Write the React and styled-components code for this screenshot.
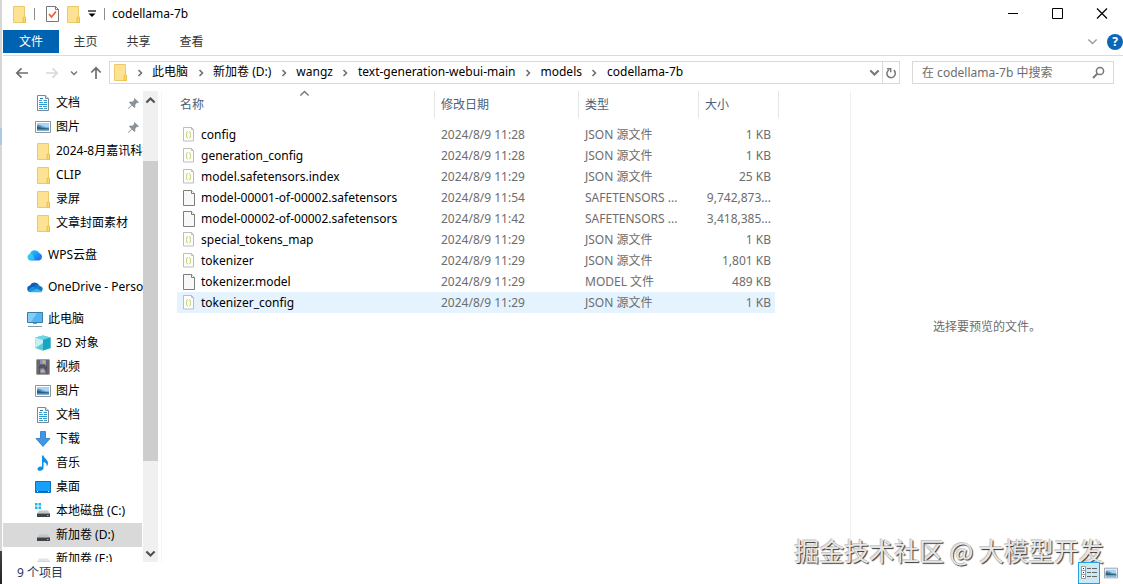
import React from "react";
import styled, { createGlobalStyle, css } from "styled-components";

const GlobalStyle = createGlobalStyle`
  * {
    box-sizing: border-box;
  }
  body {
    margin: 0;
    background: #fff;
    color: #000;
    font-family: "Noto Sans", "Noto Sans CJK SC", sans-serif;
    font-size: 12px;
    line-height: 16px;
  }
  button, input {
    font: inherit;
    color: inherit;
    border: 0;
    padding: 0;
    margin: 0;
    background: none;
  }
  a {
    color: inherit;
    text-decoration: none;
  }
  svg {
    display: block;
    flex: none;
  }
`;

// ---------- icons ----------

const FolderIcon = () => (
  <svg width="13" height="17" viewBox="0 0 13 17">
    <path d="M.5.5h11v9.500l1 1.500v5H.5z" fill="#fde293" stroke="#ecca6c" />
    <path d="M10 16.500V11.500l1.200-1 1.300 1v5z" fill="#fbd866" stroke="#e5bd48" strokeWidth=".8" />
  </svg>
);

const DocIcon = () => (
  <svg width="16" height="16" viewBox="0 0 16 16">
    <path d="M2.500.5h8l3 3v12h-11z" fill="#fff" stroke="#7c8791" />
    <path d="M10.500.5v3h3" fill="#e8edf1" stroke="#7c8791" />
    <path d="M4 5.500h3M8.500 5.500H12M4 7.500h4M9 7.500h3M4 9.500h8M4 11.500h3M8 11.500h4M4 13.500h4M9 13.500h3" stroke="#2f9bd0" />
    <path d="M5 3.500h3" stroke="#1f74ab" />
  </svg>
);

const PictureIcon = ({ size = 16 }) => (
  <svg width={size} height={size} viewBox="0 0 16 16">
    <path d="M.5 2.500h15v11H.5z" fill="#fff" stroke="#8d969e" />
    <path d="M2 4h12v8H2z" fill="#a9d3f7" />
    <path d="M2 6c3-1 4 .5 6 1.500s4 1 6 1V12H2z" fill="#5b93c0" />
    <path d="M2 7.500c2 0 4 1.500 6 1.500s4 .5 6 .5V11H2z" fill="#2c5f72" />
    <path d="M2 10.500h12V12H2z" fill="#7db2da" />
  </svg>
);

const WpsIcon = () => (
  <svg width="16" height="16" viewBox="0 0 16 16">
    <defs>
      <linearGradient id="wps" x1="0" y1="0" x2="1" y2="1">
        <stop offset="0" stopColor="#31d4f5" />
        <stop offset=".5" stopColor="#1c9cf8" />
        <stop offset="1" stopColor="#1f5df0" />
      </linearGradient>
    </defs>
    <path d="M4 13.500a3.500 3.500 0 0 1-1-6.800A5 5 0 0 1 12.300 6 3.900 3.900 0 0 1 12 13.500z" fill="url(#wps)" />
    <path d="M3 6.700C5 6.200 7 8 7.500 13.500H4a3.500 3.500 0 0 1-1-6.800z" fill="#3fe0ef" opacity=".6" />
  </svg>
);

const OneDriveIcon = () => (
  <svg width="16" height="16" viewBox="0 0 16 16">
    <path d="M3 6.500A5 5 0 0 1 12 6c-3 2-6 3-9 7a3.300 3.300 0 0 1 0-6.500z" fill="#0c5fb4" />
    <path d="M1.200 11.800C3 8 6 7 8 8l5 5H3.500a3 3 0 0 1-2.300-1.200z" fill="#1690df" />
    <path d="M7 8.500C9 5.500 12 5.500 13 7c3 .5 3.500 4 1.500 5.500z" fill="#1279cd" />
    <path d="M3 13.200c3-1 5-4 8-3l4 2.200c-.5.600-1 .8-2 .8z" fill="#35b5f0" />
  </svg>
);

const PcIcon = () => (
  <svg width="16" height="16" viewBox="0 0 16 16">
    <path d="M.5 1.500h15v10H.5z" fill="#52b4f2" stroke="#3c7cab" />
    <path d="M1 2h9L4 11H1z" fill="#83cdf9" />
    <path d="M6 12h4v1H6z" fill="#8b9aa5" />
    <path d="M1 15.500h14" stroke="#7b98ab" />
  </svg>
);

const CubeIcon = () => (
  <svg width="16" height="16" viewBox="0 0 16 16">
    <path d="M8 .5 15.500 2.500v10.500L8 15.500.5 13V2.500z" fill="#36b8d0" />
    <path d="M8 .5 15.500 2.500 8 5 .5 2.500z" fill="#6fd3e2" />
    <path d="M.5 2.500 8 5v10.500L.5 13z" fill="#c4eff3" />
    <path d="M.5 13 8 8v7.500z" fill="#5cc9d6" />
    <path d="M8 5 15.500 2.500V13L8 15.500z" fill="#17a6c2" />
  </svg>
);

const VideoIcon = () => (
  <svg width="16" height="16" viewBox="0 0 16 16">
    <path d="M1.500.5h13v15h-13z" fill="#3a3a3c" />
    <path d="M4.500 1h7v6.500h-7z" fill="#6f93dc" />
    <path d="M4.500 8.500h7V15h-7z" fill="#5676bd" />
    <path d="M7 1.500h3.500v3H8zM5 12l3-2.500 2.500 4H6z" fill="#e5b04a" />
    <path d="M5 5.500h5l1 2H5zM9 9h2.500v3z" fill="#6d4432" />
    <path d="M3 1.500v13M13 1.500v13" stroke="#f2f2f2" strokeDasharray="1 1" />
  </svg>
);

const DownloadIcon = () => (
  <svg width="16" height="16" viewBox="0 0 16 16">
    <path d="M5.500.5h5v7h4.500L8 15.500 1 7.500h4.500z" fill="#3c97e8" stroke="#2b77c2" strokeWidth=".8" />
  </svg>
);

const MusicIcon = () => (
  <svg width="16" height="16" viewBox="0 0 16 16">
    <path d="M7 .5h1.500C9 3.500 13 4.500 13 8c0 1.500-.5 2.500-1.300 3.500C12 8.500 10.500 7.500 8.500 7v6c0 1.500-1.500 2.800-3.500 2.800S2.500 14.800 2.500 13.700s1.500-2.200 3-2.200c.6 0 1 .1 1.500.3z" fill="#0d8fe8" />
  </svg>
);

const DesktopIcon = () => (
  <svg width="16" height="16" viewBox="0 0 16 16">
    <path d="M.5 2.500h15v11H.5z" fill="#17a0fb" stroke="#0b74b8" />
    <path d="M1 12h14v1H1z" fill="#0a63a6" />
    <path d="M2 12.500h1M13 12.500h1" stroke="#fff" />
  </svg>
);

const DriveIcon = ({ windows, pale }) => (
  <svg width="16" height="16" viewBox="0 0 16 16">
    {windows && <path d="M0 0h2.500v2.500H0zM3.500 0H6v2.500H3.500zM0 3.500h2.500V6H0zM3.500 3.500H6V6H3.500z" fill="#1fb3e6" />}
    <path d="M4 7.500h9l2 3H2z" fill={pale ? "#e4e4e4" : "#c3c6c8"} />
    <path d="M2 10.500h13v3.500H2z" fill={pale ? "#b9b9b9" : "#3f4447"} />
    <path d="M12 12.500h1.500" stroke="#54e08a" />
  </svg>
);

const PinIcon = () => (
  <svg width="11" height="11" viewBox="0 0 11 11">
    <path d="M6.500 0 11 4.500l-1.300.5-.7-.2-1.800 1.900.2 2.300-1 1L4 7.600.5 11 0 10.500 3.400 7 1 4.600l1-1 2.300.2 1.900-1.800L6 1.200z" fill="#8a9299" />
  </svg>
);

const JsonIcon = () => (
  <svg width="12" height="15" viewBox="0 0 12 15">
    <path d="M.5.5h8l2 2v11.500h-10z" fill="#fdfdfb" stroke="#bdbdbd" />
    <path d="M8.500.5v2h2" fill="none" stroke="#bdbdbd" />
    <path d="M4.700 4.500c-1.500 0-.8 2-1 2.600l-.7.6.7.6c.2.600-.5 2.600 1 2.600M6.300 4.500c1.500 0 .8 2 1 2.600l.7.6-.7.6c-.2.600.5 2.600-1 2.600" fill="none" stroke="#b5cf5c" />
  </svg>
);

const BlankIcon = () => (
  <svg width="12" height="16" viewBox="0 0 12 16">
    <path d="M.5.5h8l3 3v12H.5z" fill="#f8f8f8" stroke="#7d7d7d" />
    <path d="M8.500.5v3h3" fill="#fff" stroke="#7d7d7d" />
  </svg>
);

const CheckDocIcon = () => (
  <svg width="13" height="16" viewBox="0 0 13 16">
    <path d="M.5.5h9l3 3v12H.5z" fill="#fff" stroke="#777" />
    <path d="M9.500.5v3h3" fill="none" stroke="#777" />
    <path d="m3 8 2.500 3L10 5.500" fill="none" stroke="#ee5a28" strokeWidth="1.700" />
  </svg>
);

const Chevron = ({ dir = "right", size = 8, color = "#6b6b6b", width = 1.5 }) => {
  const turn = { right: 0, down: 90, left: 180, up: 270 }[dir];
  return (
    <svg width={size} height={size} viewBox="0 0 8 8">
      <path d="M2.500 1 5.500 4 2.500 7" fill="none" stroke={color} strokeWidth={width} transform={`rotate(${turn} 4 4)`} />
    </svg>
  );
};

const Arrow = ({ dir = "left", color = "#6e6e6e" }) => {
  const turn = { left: 0, up: 90, right: 180 }[dir];
  return (
    <svg width="14" height="14" viewBox="0 0 14 14">
      <path d="M13 7H2M6.500 2.300 1.800 7l4.700 4.700" fill="none" stroke={color} strokeWidth="1.700" transform={`rotate(${turn} 7 7)`} />
    </svg>
  );
};

// ---------- data ----------

const crumbs = ["此电脑", "新加卷 (D:)", "wangz", "text-generation-webui-main", "models", "codellama-7b"];

const groups = [
  [
    { name: "文档", icon: <DocIcon />, pinned: true },
    { name: "图片", icon: <PictureIcon />, pinned: true },
    { name: "2024-8月嘉讯科技", icon: <FolderIcon /> },
    { name: "CLIP", icon: <FolderIcon /> },
    { name: "录屏", icon: <FolderIcon /> },
    { name: "文章封面素材", icon: <FolderIcon /> },
  ],
  [{ name: "WPS云盘", icon: <WpsIcon />, root: true }],
  [{ name: "OneDrive - Personal", icon: <OneDriveIcon />, root: true }],
  [
    { name: "此电脑", icon: <PcIcon />, root: true },
    { name: "3D 对象", icon: <CubeIcon /> },
    { name: "视频", icon: <VideoIcon /> },
    { name: "图片", icon: <PictureIcon /> },
    { name: "文档", icon: <DocIcon /> },
    { name: "下载", icon: <DownloadIcon /> },
    { name: "音乐", icon: <MusicIcon /> },
    { name: "桌面", icon: <DesktopIcon /> },
    { name: "本地磁盘 (C:)", icon: <DriveIcon windows /> },
    { name: "新加卷 (D:)", icon: <DriveIcon />, selected: true },
    { name: "新加卷 (E:)", icon: <DriveIcon pale /> },
  ],
];

const files = [
  { name: "config", date: "2024/8/9 11:28", type: "JSON 源文件", size: "1 KB", json: true },
  { name: "generation_config", date: "2024/8/9 11:28", type: "JSON 源文件", size: "1 KB", json: true },
  { name: "model.safetensors.index", date: "2024/8/9 11:29", type: "JSON 源文件", size: "25 KB", json: true },
  { name: "model-00001-of-00002.safetensors", date: "2024/8/9 11:54", type: "SAFETENSORS ...", size: "9,742,873..." },
  { name: "model-00002-of-00002.safetensors", date: "2024/8/9 11:42", type: "SAFETENSORS ...", size: "3,418,385..." },
  { name: "special_tokens_map", date: "2024/8/9 11:29", type: "JSON 源文件", size: "1 KB", json: true },
  { name: "tokenizer", date: "2024/8/9 11:29", type: "JSON 源文件", size: "1,801 KB", json: true },
  { name: "tokenizer.model", date: "2024/8/9 11:29", type: "MODEL 文件", size: "489 KB" },
  { name: "tokenizer_config", date: "2024/8/9 11:29", type: "JSON 源文件", size: "1 KB", json: true, hover: true },
];

// ---------- parts ----------

const TitleBar = () => (
  <TitleRow>
    <FolderIcon />
    <Divider />
    <QuickAccess>
      <button aria-label="属性"><CheckDocIcon /></button>
      <button aria-label="新建文件夹"><FolderIcon /></button>
      <button aria-label="自定义快速访问工具栏">
        <svg width="8" height="8" viewBox="0 0 8 8">
          <path d="M0 1h8" stroke="#000" strokeWidth="1.200" />
          <path d="M.5 3.500h7L4 7z" />
        </svg>
      </button>
    </QuickAccess>
    <Divider />
    <Title>codellama-7b</Title>
    <WindowButton aria-label="最小化">
      <svg width="12" height="12" viewBox="0 0 12 12"><path d="M1 5.500h10" stroke="#000" /></svg>
    </WindowButton>
    <WindowButton aria-label="最大化">
      <svg width="12" height="12" viewBox="0 0 12 12"><path d="M.5.5h10v10H.5z" fill="none" stroke="#000" /></svg>
    </WindowButton>
    <WindowButton aria-label="关闭">
      <svg width="12" height="12" viewBox="0 0 12 12"><path d="m1 .5 10 10M11 .5l-10 10" stroke="#000" strokeWidth="1.200" /></svg>
    </WindowButton>
  </TitleRow>
);

const Ribbon = () => (
  <RibbonRow>
    <RibbonTab $active>文件</RibbonTab>
    <RibbonTab>主页</RibbonTab>
    <RibbonTab>共享</RibbonTab>
    <RibbonTab>查看</RibbonTab>
    <RibbonEnd>
      <button aria-label="展开功能区"><Chevron dir="down" size={11} color="#9a9a9a" width={1} /></button>
      <Help aria-label="帮助">?</Help>
    </RibbonEnd>
  </RibbonRow>
);

const NavBar = () => (
  <NavRow>
    <History>
      <button aria-label="后退"><Arrow /></button>
      <button aria-label="前进"><Arrow dir="right" color="#d8d8d8" /></button>
      <button aria-label="最近的位置"><Chevron dir="down" color="#777" /></button>
      <button aria-label="上移"><Arrow dir="up" /></button>
    </History>
    <AddressBar>
      <Crumbs aria-label="地址">
        <FolderIcon />
        {crumbs.map((crumb) => (
          <React.Fragment key={crumb}>
            <CrumbGap><Chevron /></CrumbGap>
            <a href="#">{crumb}</a>
          </React.Fragment>
        ))}
      </Crumbs>
      <AddressButton aria-label="以前的位置"><Chevron dir="down" size={11} color="#777" /></AddressButton>
      <AddressButton $bordered aria-label="刷新">
        <svg width="12" height="12" viewBox="0 0 12 12">
          <path d="M8.800 3.200A4.200 4.200 0 1 1 4 2.800" fill="none" stroke="#777" strokeWidth="1.500" />
          <path d="M2 1.700h3.700v3.500" fill="none" stroke="#777" strokeWidth="1.400" />
        </svg>
      </AddressButton>
    </AddressBar>
    <SearchBox>
      <input type="search" aria-label="搜索" placeholder="在 codellama-7b 中搜索" />
      <svg width="13" height="13" viewBox="0 0 13 13">
        <circle cx="8" cy="5" r="3.600" fill="none" stroke="#777" strokeWidth="1.500" />
        <path d="M5.500 7.500 1 12" stroke="#777" strokeWidth="1.800" />
      </svg>
    </SearchBox>
  </NavRow>
);

const Sidebar = () => (
  <SidebarPane>
    <Tree>
      {groups.map((group, i) => (
        <TreeGroup key={i}>
          {group.map(({ name, icon, root, pinned, selected }) => (
            <TreeItem key={name} href="#" $root={root} $selected={selected}>
              <IconSlot>{icon}</IconSlot>
              <TreeLabel>{name}</TreeLabel>
              {pinned && <PinIcon />}
            </TreeItem>
          ))}
        </TreeGroup>
      ))}
    </Tree>
    <ScrollTrack>
      <ScrollButton aria-label="向上滚动"><Chevron dir="up" size={11} color="#505050" /></ScrollButton>
      <ScrollSpace $grow={52} />
      <ScrollThumb />
      <ScrollSpace $grow={83} />
      <ScrollButton aria-label="向下滚动"><Chevron dir="down" size={11} color="#505050" /></ScrollButton>
    </ScrollTrack>
  </SidebarPane>
);

const FileList = () => (
  <FilePane>
    <FileTable>
      <colgroup>
        <col width="258" />
        <col width="144" />
        <col width="120" />
        <col width="80" />
      </colgroup>
      <thead>
        <tr>
          <HeadCell $first>
            名称
            <SortMark><Chevron dir="up" size={11} color="#777" width={1} /></SortMark>
          </HeadCell>
          <HeadCell>修改日期</HeadCell>
          <HeadCell>类型</HeadCell>
          <HeadCell>大小</HeadCell>
        </tr>
      </thead>
      <tbody>
        {files.map((file) => (
          <FileRow key={file.name} $hover={file.hover}>
            <td>
              <FileName>
                {file.json ? <JsonIcon /> : <BlankIcon />}
                {file.name}
              </FileName>
            </td>
            <td>{file.date}</td>
            <td>{file.type}</td>
            <td>{file.size}</td>
          </FileRow>
        ))}
      </tbody>
    </FileTable>
  </FilePane>
);

const App = () => {
  return (
    <Window>
      <GlobalStyle />
      <TitleBar />
      <Ribbon />
      <NavBar />
      <Main>
        <Sidebar />
        <FileList />
        <Preview>选择要预览的文件。</Preview>
      </Main>
      <StatusBar>
        <span>9 个项目</span>
        <ViewButtons>
          <ViewButton $active aria-label="详细信息">
            <svg width="16" height="14" viewBox="0 0 16 14">
              <path d="M.5.5h4v12h-4zM.5 4.500h4M.5 8.500h4" fill="#fff" stroke="#9a9a9a" />
              <path d="M2 2.500h1M2 6.500h1M2 10.500h1" stroke="#222" />
              <path d="M6 2.500h4M11 2.500h5M6 6.500h4M11 6.500h5M6 10.500h4M11 10.500h5" stroke="#666" />
            </svg>
          </ViewButton>
          <ViewButton aria-label="大图标"><PictureIcon size={14} /></ViewButton>
        </ViewButtons>
      </StatusBar>
      <Watermark>掘金技术社区 @ 大模型开发</Watermark>
    </Window>
  );
};

// ---------- styles ----------

const Window = styled.div`
  position: relative;
  display: flex;
  flex-direction: column;
  height: 100vh;
  padding-left: 3px;
  overflow: hidden;
  /* the edge of the window behind shows on the left */
  background:
    linear-gradient(#444, #222) left bottom / 2px 33px no-repeat,
    linear-gradient(#a9c9e6, #a9c9e6) left 128px / 2px 17px no-repeat,
    linear-gradient(#d6d6d6, #d6d6d6) left / 2px 100% no-repeat,
    #fff;
`;

const TitleRow = styled.header`
  display: flex;
  align-items: center;
  height: 28px;
  padding-left: 10px;
`;

const Divider = styled.span`
  width: 1px;
  height: 12px;
  margin: 0 7px 0 8px;
  background: #8c8c8c;
`;

const QuickAccess = styled.div`
  display: flex;
  align-items: center;
  gap: 8px;
  padding-left: 4px;
`;

const Title = styled.h1`
  flex: 1;
  margin: 0;
  font-size: 12px;
  font-weight: 400;
`;

const WindowButton = styled.button`
  display: flex;
  align-items: center;
  justify-content: center;
  width: 45px;
  height: 28px;
  &:last-child {
    width: 43px;
  }
`;

const RibbonRow = styled.nav`
  display: flex;
  align-items: center;
  height: 28px;
  border-bottom: 1px solid #dadbdc;
`;

const RibbonTab = styled.button`
  width: 53px;
  height: 23px;
  color: #333;
  ${({ $active }) =>
    $active &&
    css`
      width: 56px;
      color: #fff;
      background: #0063b1;
    `}
`;

const RibbonEnd = styled.div`
  display: flex;
  align-items: center;
  gap: 9px;
  margin-left: auto;
`;

const Help = styled.button`
  width: 16px;
  height: 16px;
  border-radius: 50%;
  background: #0b66b8;
  color: #fff;
  font-weight: 700;
`;

const NavRow = styled.div`
  display: flex;
  align-items: center;
  height: 33px;
  padding-right: 9px;
`;

const History = styled.div`
  display: flex;
  align-items: center;
  gap: 11px;
  width: 106px;
  padding-left: 12px;
  button:nth-child(2) {
    margin-left: 5px;
  }
`;

const fieldBox = css`
  display: flex;
  align-items: center;
  height: 23px;
  border: 1px solid #d9d9d9;
`;

const AddressBar = styled.div`
  ${fieldBox}
  flex: 1;
`;

const Crumbs = styled.nav`
  display: flex;
  align-items: center;
  flex: 1;
  padding-left: 4px;
  line-height: 18px;
  a {
    height: 20px;
  }
`;

const CrumbGap = styled.span`
  display: flex;
  justify-content: center;
  width: 25px;
`;

const AddressButton = styled.button`
  display: flex;
  align-items: center;
  justify-content: center;
  width: ${({ $bordered }) => ($bordered ? 17 : 15)}px;
  height: 21px;
  border-left: ${({ $bordered }) => ($bordered ? "1px solid #d9d9d9" : "0")};
`;

const SearchBox = styled.label`
  ${fieldBox}
  width: 202px;
  margin-left: 12px;
  padding: 0 8px 0 9px;
  input {
    flex: 1;
    min-width: 0;
    outline: 0;
  }
  input::placeholder {
    color: #6d6d6d;
    opacity: 1;
  }
`;

const Main = styled.main`
  display: flex;
  flex: 1;
  min-height: 0;
  padding-top: 2px;
`;

const SidebarPane = styled.aside`
  display: flex;
  width: 159px;
  padding-right: 3px;
  border-right: 1px solid #f5f5f5;
`;

const Tree = styled.nav`
  flex: 1;
  min-width: 0;
  overflow: hidden;
`;

const TreeGroup = styled.div`
  margin-bottom: 8px;
`;

const TreeItem = styled.a`
  display: flex;
  align-items: center;
  gap: 5px;
  height: 24px;
  margin-right: 1px;
  padding: 0 3px 0 ${({ $root }) => ($root ? 24 : 32)}px;
  background: ${({ $selected }) => ($selected ? "#d9d9d9" : "transparent")};
`;

const IconSlot = styled.span`
  display: flex;
  justify-content: center;
  flex: none;
  width: 16px;
`;

const TreeLabel = styled.span`
  flex: 1;
  white-space: nowrap;
`;

const ScrollTrack = styled.div`
  display: flex;
  flex-direction: column;
  width: 15px;
  background: #f0f0f0;
`;

const ScrollButton = styled.button`
  display: flex;
  align-items: center;
  justify-content: center;
  height: 18px;
`;

const ScrollSpace = styled.div`
  flex: ${({ $grow }) => $grow};
`;

const ScrollThumb = styled.div`
  flex: 300;
  background: #cdcdcd;
`;

const FilePane = styled.section`
  flex: 1;
  min-width: 0;
  padding-left: 15px;
`;

const FileTable = styled.table`
  width: 602px;
  table-layout: fixed;
  border-collapse: separate;
  border-spacing: 0;
  tbody::before {
    content: "";
    display: block;
    height: 6px;
  }
`;

const HeadCell = styled.th`
  position: relative;
  height: 27px;
  padding: 0 0 0 ${({ $first }) => ($first ? 3 : 6)}px;
  border-right: 1px solid #e5e5e5;
  color: #4c607a;
  font-weight: 400;
  text-align: left;
`;

const SortMark = styled.span`
  position: absolute;
  top: -3px;
  left: 122px;
`;

const FileRow = styled.tr`
  td {
    height: 21px;
    padding: 0 6px;
    color: #6d6d6d;
    white-space: nowrap;
    background: ${({ $hover }) => ($hover ? "#e5f3ff" : "transparent")};
    background-clip: padding-box;
  }
  td:first-child {
    color: #000;
  }
  td:last-child {
    padding: 0 4px 0 0;
    border-right: 4px solid transparent;
    text-align: right;
  }
`;

const FileName = styled.span`
  display: flex;
  align-items: center;
  gap: 6px;
`;

const Preview = styled.aside`
  display: flex;
  align-items: center;
  justify-content: center;
  width: 273px;
  border-left: 1px solid #f0f0f0;
  color: #6d6d6d;
`;

const StatusBar = styled.footer`
  display: flex;
  align-items: center;
  justify-content: space-between;
  height: 22px;
  padding: 0 1px 0 14px;
  color: #1e395b;
`;

const ViewButtons = styled.div`
  position: relative;
  z-index: 1;
  display: flex;
`;

const ViewButton = styled.button`
  display: flex;
  align-items: center;
  justify-content: center;
  width: 22px;
  height: 22px;
  ${({ $active }) =>
    $active &&
    css`
      border: 1px solid #26a0da;
      background: #cbe8f6;
    `}
`;

const Watermark = styled.div`
  position: absolute;
  right: 19px;
  bottom: 16px;
  color: #e6e6e6;
  font-family: "Noto Sans CJK SC", sans-serif;
  font-size: 25px;
  line-height: 36px;
  text-shadow: 1px 1px 1px #333, -1px -1px 0 #c8c8c8;
  pointer-events: none;
`;

export default App;
